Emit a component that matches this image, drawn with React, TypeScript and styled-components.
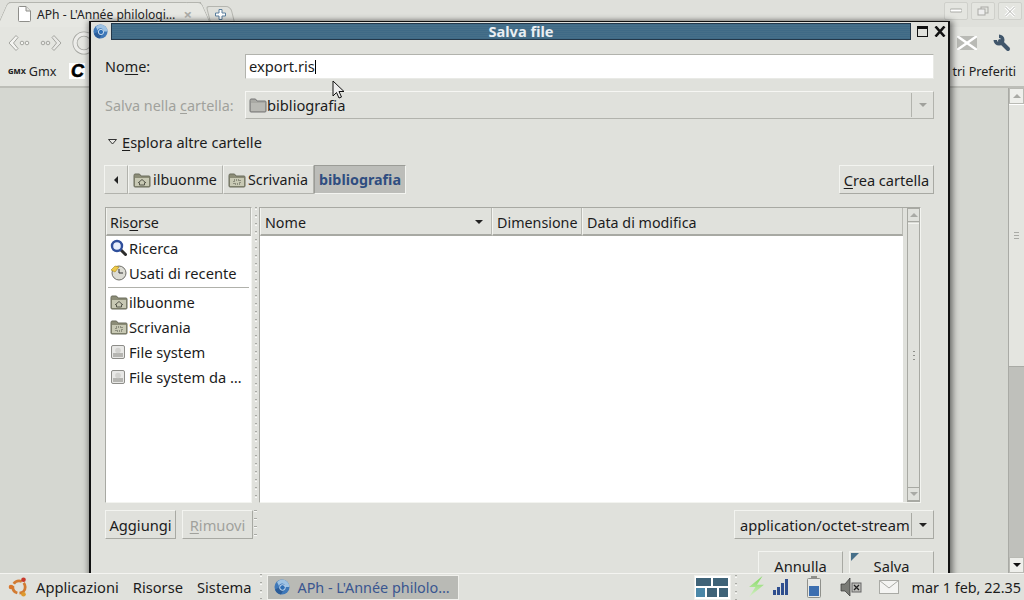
import React from 'react';
import styled, { createGlobalStyle } from 'styled-components';

const Global = createGlobalStyle`
  html, body { margin: 0; padding: 0; width: 1024px; height: 600px; overflow: hidden; }
  body { font-family: "Noto Sans", "Open Sans", sans-serif; font-size: 14.7px; color: #1c1c1c; background: #d5d7d1; }
  * { box-sizing: border-box; }
`;

const Desktop = styled.div`
  position: relative; width: 1024px; height: 600px; overflow: hidden;
  display: flex; flex-direction: column;
`;

/* ---------- browser behind ---------- */
const Browser = styled.div`
  flex: 1; min-height: 0; display: flex; flex-direction: column; background: #e4e5e0;
`;
const TabStrip = styled.div`
  height: 27px; display: flex; align-items: flex-end; padding-left: 9px; position: relative;
  background: #dfe0db;
`;
const Tab = styled.div`
  position: relative; width: 192px; height: 25px; padding: 0 9px 2px 9px; display: flex; align-items: center; gap: 6px;
  background: #e6e7e2; border-top: 1px solid #b4b5af; font-size: 12.1px; color: #222;
  &::before, &::after {
    content: ''; position: absolute; top: -1px; bottom: 0; width: 14px; background: #e6e7e2; border-top: 1px solid #b4b5af;
  }
  &::before { left: -7px; transform: skewX(-24deg); border-left: 1px solid #b4b5af; border-top-left-radius: 4px; }
  &::after { right: -6px; transform: skewX(24deg); border-right: 1px solid #b4b5af; border-top-right-radius: 4px; }
`;
const TabPart = styled.span`
  position: relative; z-index: 1; display: flex; align-items: center; flex: none;
`;
const TabTitle = styled(TabPart)` flex: 1; white-space: nowrap; `;
const TabClose = styled(TabPart)` color: #a9a9a5; font-size: 15px; font-weight: 700; `;
const NewTab = styled.div`
  width: 25px; height: 17px; margin: 0 0 4px 7px; border: 1px solid #b4b5af; border-radius: 3px 5px 0 0; transform: skewX(14deg);
  display: flex; align-items: center; justify-content: center;
`;
const NewTabGlyph = styled.svg` transform: skewX(-14deg); `;
const WinButtons = styled.div`
  position: absolute; right: 2px; top: 2px; display: flex; gap: 3px;
`;
const WinButton = styled.div`
  width: 24px; height: 18px; border: 1px solid #cfd0cb; border-radius: 2px; background: #e4e5e0;
  display: flex; align-items: center; justify-content: center;
`;
const Toolbar = styled.div`
  height: 32px; display: flex; align-items: center; padding: 0 13px 0 8px; background: #e4e5e0;
`;
const ToolSlot = styled.div<{ $mr: number }>`
  margin-right: ${p => p.$mr}px; display: flex; align-items: center;
`;
const ToolSpacer = styled.div` flex: 1; `;
const Bookmarks = styled.div`
  height: 29px; display: flex; align-items: center; padding: 0 8px 3px 8px; font-size: 12.6px; color: #222;
  background: #e4e5e0; border-bottom: 2px solid #bdbeb8;
`;
const GmxLogo = styled.span` font-size: 7.5px; font-weight: 800; margin-right: 3px; `;
const CLogo = styled.span`
  width: 16px; height: 16px; margin-left: 13px; background: #fff; color: #000; font-weight: 900; font-style: italic;
  font-size: 18px; line-height: 16px; text-align: center; font-family: "Liberation Sans", sans-serif;
  -webkit-text-stroke: .6px #000;
`;
const BookmarkRest = styled.span` margin-left: auto; `;
const Page = styled.div`
  flex: 1; min-height: 0; display: flex; justify-content: flex-end; background: #d5d7d1;
`;
const PageScroll = styled.div`
  width: 16px; border-left: 1px solid #a9aaa5; background: #bfc0bb; display: flex; flex-direction: column; align-items: stretch;
`;
const PageArrow = styled.div`
  height: 16px; flex: none; background: #eeefeb; border: 1px solid #b9bab4; display: flex; align-items: center; justify-content: center;
`;
const PageThumb = styled.div`
  height: 263px; flex: none; background: #e4e5e0; border-bottom: 1px solid #a9aaa5; border-top: 1px solid #fff;
  display: flex; align-items: center; justify-content: center;
`;
const PageTrack = styled.div` flex: 1; `;
const Grip = styled.div`
  width: 5px; height: 7px; border-top: 1px solid #a9aaa5; border-bottom: 1px solid #a9aaa5; position: relative;
  &::after { content: ''; position: absolute; left: 0; right: 0; top: 2px; height: 1px; background: #a9aaa5; }
`;

/* ---------- dialog window, floating over the browser ---------- */
const Dialog = styled.div`
  position: absolute; left: 89px; top: 21px; width: 861px; height: 560px;
  background: #e0e1dc; border: 2px solid #111; border-width: 1px 2px 0 2px;
  box-shadow: 3px 0 6px rgba(0,0,0,.45), -2px 0 5px rgba(0,0,0,.25);
  display: flex; flex-direction: column; overflow: hidden;
`;
const TitleBar = styled.div`
  height: 19px; padding: 1px 1px 1px 2px; display: flex; align-items: center; gap: 3px;
`;
const TitleStrip = styled.div`
  flex: 1; height: 17px; border: 1px solid #24384a; padding-left: 20px;
  background: repeating-linear-gradient(0deg, #3f6a86 0 1px, #466f89 1px 2px);
  color: #e9eef2; font-size: 14.6px; font-weight: 700; text-align: center; line-height: 15px;
`;
const TitleBtns = styled.div` display: flex; align-items: center; gap: 6px; padding: 0 1px 0 3px; `;
const DialogBody = styled.div`
  flex: 1; min-height: 0; padding: 13px 14px 0 13px; display: flex; flex-direction: column;
`;
const FormRow = styled.div<{ $h: number; $mb: number }>`
  height: ${p => p.$h}px; margin-bottom: ${p => p.$mb}px; display: flex; align-items: center; flex: none;
`;
const FieldLabel = styled.label<{ $off?: boolean }>`
  width: 141px; padding-left: 1px; flex: none; font-size: 14.4px; color: ${p => (p.$off ? '#a0a19c' : '#1c1c1c')};
`;
const U = styled.span` text-decoration: underline; text-underline-offset: 2px; `;
const Entry = styled.div`
  position: relative; flex: 1; height: 25px; background: #fff; border: 1px solid #b2b3ad; border-bottom-color: #e9eae6; border-right-color: #e9eae6;
  padding-left: 3px; line-height: 23px; display: flex; align-items: center;
`;
const Caret = styled.span` width: 1px; height: 14px; background: #000; `;
const Pointer = styled.svg` position: absolute; left: 86px; top: 25px; `;
const Combo = styled.div`
  flex: 1; height: 28px; border: 1px solid #f6f6f3; border-right-color: #b2b3ad; border-bottom-color: #b2b3ad;
  display: flex; align-items: center; padding-left: 3px; gap: 0;
`;
const ComboArrowCell = styled.div`
  width: 22px; height: 24px; margin-left: auto; border-left: 1px solid #b2b3ad; display: flex; align-items: center; justify-content: center;
`;
const Triangle = styled.span<{ $c?: string; $dir?: string }>`
  width: 0; height: 0; display: inline-block; flex: none;
  ${p => p.$dir === 'left'
    ? `border-top: 4px solid transparent; border-bottom: 4px solid transparent; border-right: 4px solid ${p.$c || '#222'};`
    : p.$dir === 'up'
    ? `border-left: 4px solid transparent; border-right: 4px solid transparent; border-bottom: 4px solid ${p.$c || '#222'};`
    : `border-left: 4px solid transparent; border-right: 4px solid transparent; border-top: 4px solid ${p.$c || '#222'};`}
`;
const Expander = styled.div`
  height: 20px; margin: 0 0 13px 4px; display: flex; align-items: center; gap: 5px; flex: none; font-size: 14.6px;
`;
const PathRow = styled.div`
  height: 29px; margin-bottom: 13px; display: flex; align-items: stretch; flex: none; font-size: 14.3px;
`;
const PathBtn = styled.div<{ $active?: boolean }>`
  display: flex; align-items: center; gap: 2px; padding: 0 ${p => (p.$active ? 4 : 5)}px 0 4px; flex: none;
  border: 1px solid #f3f4f0; border-right-color: #b2b3ad; border-bottom-color: #b2b3ad;
  ${p => p.$active && `background: #bcbdb9; color: #2f4d80; font-weight: 700; border-color: #9b9c97 #f3f4f0 #f3f4f0 #9b9c97;`}
`;
const PathArrow = styled(PathBtn)` width: 24px; justify-content: center; padding: 0; `;
const Spacer = styled.div` flex: 1; `;
const Btn = styled.div<{ $off?: boolean }>`
  height: 29px; padding: 0 4px; display: flex; align-items: center; justify-content: center; flex: none; white-space: nowrap;
  border: 1px solid #f3f4f0; border-right-color: #a8a9a3; border-bottom-color: #a8a9a3;
  color: ${p => (p.$off ? '#a0a19c' : '#1c1c1c')};
`;
const CreateBtn = styled(Btn)` width: 95px; padding: 0; font-size: 14.6px; `;
const SmallBtn = styled(Btn)` width: 71px; padding: 0; `;
const Panes = styled.div` height: 296px; display: flex; flex: none; margin: 0 13px 0 1px; `;
const Sidebar = styled.div`
  width: 147px; border: 1px solid #a8a9a3; border-right-color: #f3f4f0; border-bottom-color: #f3f4f0; background: #fff;
  display: flex; flex-direction: column;
`;
const ColHead = styled.div<{ $w?: number; $grow?: boolean; $split?: boolean }>`
  height: 28px; ${p => (p.$grow ? 'flex: 1;' : `width: ${p.$w}px;`)} background: #e0e1dc; display: flex; align-items: center; padding: 2px 4px 0 4px; flex-shrink: 0;
  font-size: 14.3px;
  border-bottom: 2px solid #a8a9a3; border-right: 1px solid #b9bab4; border-left: 1px solid #f3f4f0;
  ${p => p.$split && 'justify-content: space-between; padding-right: 8px;'}
`;
const SideHead = styled(ColHead)` flex: none; padding-left: 3px; `;
const SideList = styled.div` display: flex; flex-direction: column; margin-top: -1px; `;
const SideItem = styled.div`
  height: 25px; display: flex; align-items: center; padding-left: 4px; white-space: nowrap; overflow: hidden;
`;
const SideIcon = styled.span` width: 19px; flex: none; display: flex; align-items: center; `;
const SideSep = styled.div` height: 1px; margin: 2px 2px 1px; background: #b0b1ab; `;
const Handle = styled.div<{ $w?: number }>`
  width: ${p => p.$w || 7}px; flex: none;
  background: repeating-linear-gradient(180deg, #a9aaa5 0 1px, #e0e1dc 1px 2px, #f8f8f6 2px 3px, #e0e1dc 3px 8px) center/2px 100% repeat-y;
`;
const FileArea = styled.div`
  flex: 1; display: flex; border: 1px solid #a8a9a3; border-right-color: #f3f4f0; border-bottom-color: #f3f4f0;
`;
const FileMain = styled.div` flex: 1; background: #fff; display: flex; flex-direction: column; min-width: 0; `;
const FileHead = styled.div` display: flex; `;
const VScroll = styled.div`
  width: 13px; margin: 0 0 0 4px; border: 1px solid #a8a9a3; display: flex; flex-direction: column; background: #d9dad5; flex: none;
`;
const ScrollBtn = styled.div`
  height: 13px; background: #e0e1dc; display: flex; align-items: center; justify-content: center; flex: none;
  border-bottom: 1px solid #a8a9a3;
`;
const ScrollThumb = styled.div`
  flex: 1; margin: 1px 0 0; background: #e0e1dc; border-top: 1px solid #f3f4f0; border-bottom: 1px solid #a8a9a3; display: flex; align-items: center; justify-content: center;
`;
const Dots = styled.div`
  width: 2px; height: 10px; background: repeating-linear-gradient(180deg, #8f908b 0 1px, transparent 1px 4px);
`;
const ScrollArea = styled.div` flex: none; width: 17px; display: flex; `;
const BottomRow = styled.div`
  height: 29px; margin: 7px 0 0 1px; display: flex; align-items: stretch; gap: 6px; flex: none;
`;
const SmallHandle = styled.div`
  width: 3px; margin-left: -5px; background: repeating-linear-gradient(180deg, #a9aaa5 0 1px, #f8f8f6 1px 2px, #e0e1dc 2px 8px);
`;
const TypeCombo = styled.div`
  width: 200px; height: 29px; border: 1px solid #f3f4f0; border-right-color: #a8a9a3; border-bottom-color: #a8a9a3;
  display: flex; align-items: center; padding-left: 5px; margin-left: auto; white-space: nowrap;
`;
const TypeArrow = styled.div`
  height: 23px; width: 22px; margin-left: auto; border-left: 1px solid #a8a9a3; display: flex; align-items: center; justify-content: center; flex: none;
`;
const ActionRow = styled.div`
  margin-top: 12px; display: flex; justify-content: flex-end; gap: 6px; height: 29px; flex: none;
`;
const Action = styled(Btn)` width: 85px; position: relative; `;
const Corner = styled.span`
  position: absolute; left: 1px; top: 1px; width: 0; height: 0; border-top: 8px solid #466f89; border-right: 8px solid transparent;
`;

/* ---------- panel ---------- */
const Panel = styled.div`
  height: 27px; flex: none; position: relative; z-index: 2; background: #e0e1dc; border-top: 1px solid #f4f4f1;
  display: flex; align-items: center; padding-left: 8px;
`;
const PanelMenu = styled.span<{ $ml?: number; $mr?: number }>`
  margin-left: ${p => p.$ml || 0}px; margin-right: ${p => p.$mr ?? 14}px;
`;
const TaskHandle = styled(Handle)<{ $m?: string }>` align-self: stretch; width: 10px; margin: ${p => p.$m || '0 1px 0 0'}; `;
const Task = styled.div`
  width: 192px; height: 25px; background: #b9bab5; border: 1px solid #f0f0ec; font-size: 14.4px;
  display: flex; align-items: center; padding-left: 6px; gap: 7px; color: #3a5690; white-space: nowrap;
`;
const Tray = styled.div` margin-left: auto; display: flex; align-items: center; `;
const TrayIcon = styled.svg<{ $ml?: number }>` margin-left: ${p => p.$ml || 0}px; flex: none; `;
const Clock = styled.span` margin: 0 3px 0 13px; white-space: nowrap; font-size: 14.4px; `;
const Switcher = styled.div`
  width: 37px; height: 25px; padding: 2px 1px; border: 1px solid #f0f0ec; background: #fff; display: grid;
  grid-template-columns: repeat(6, 1fr); grid-template-rows: 1fr 1fr; gap: 2px;
`;
const Desk = styled.div<{ $span: number; $on?: boolean }>`
  grid-column: span ${p => p.$span}; background: ${p => (p.$on ? '#4a87a8' : '#3f6378')};
`;

/* ---------- icons ---------- */
const FolderIcon = ({ kind }: { kind: 'home' | 'desk' | 'plain' }) => (
  <svg width="18" height="16" viewBox="0 0 18 16">
    <path d="M1 3.5 L1 14 Q1 15 2 15 L16 15 Q17 15 17 14 L17 5 Q17 4 16 4 L8 4 L6.5 2 L2 2 Q1 2 1 3.5Z" fill={kind === 'plain' ? '#a9a9a4' : '#8c8d77'} stroke={kind === 'plain' ? '#777' : '#6b6c5c'} strokeWidth="1" />
    <rect x="2" y="6" width="14" height="8" fill={kind === 'plain' ? '#b9b9b4' : '#c8c9b4'} />
    {kind === 'home' && <path d="M5 11 L9 7.5 L13 11 M6.5 10.5 V13 H11.5 V10.5" fill="none" stroke="#55564a" strokeWidth="1" />}
    {kind === 'desk' && <rect x="6" y="8" width="6" height="4" fill="none" stroke="#55564a" strokeWidth="1" strokeDasharray="1 1" />}
  </svg>
);
const SearchIcon = () => (
  <svg width="17" height="17" viewBox="0 0 17 17">
    <line x1="10" y1="10" x2="15.5" y2="15.5" stroke="#2c2c2c" strokeWidth="3" strokeLinecap="round" />
    <circle cx="7" cy="7" r="5" fill="#e7eefb" stroke="#2f4f9b" strokeWidth="2.4" />
  </svg>
);
const RecentIcon = () => (
  <svg width="17" height="17" viewBox="0 0 17 17">
    <circle cx="9" cy="9" r="7" fill="#dcdcd4" stroke="#6e6e68" />
    <path d="M9 5 V9 H13" fill="none" stroke="#333" strokeWidth="1" />
    <path d="M1 6 L5 2 L9 3 L5 8Z" fill="#eec94a" stroke="#a88a1e" strokeWidth=".6" />
  </svg>
);
const DriveIcon = () => (
  <svg width="16" height="16" viewBox="0 0 16 16">
    <rect x="1.5" y="1.5" width="13" height="13" rx="1.5" fill="#e8e8e6" stroke="#8d8d89" />
    <rect x="3" y="9" width="10" height="4" fill="#b5b5b1" />
    <circle cx="8" cy="6.5" r="2.8" fill="#d2d2cf" />
  </svg>
);
const ChromeIcon = ({ s = 16 }: { s?: number }) => (
  <svg width={s} height={s} viewBox="0 0 16 16">
    <circle cx="8" cy="8" r="7.5" fill="#3f78b8" />
    <path d="M8 .5 A7.5 7.5 0 0 1 15.5 8 L11 8 A3 3 0 0 0 5 7 L3 3 A7.5 7.5 0 0 1 8 .5Z" fill="#9fc3e3" />
    <path d="M1 10.5 A7.5 7.5 0 0 0 7 15.5 L10 10 A3 3 0 0 1 5 8.5Z" fill="#2b5c98" />
    <circle cx="8.5" cy="8.5" r="2.8" fill="#2f6fb5" stroke="#cfe0f0" strokeWidth="1" />
  </svg>
);
const UbuntuIcon = () => (
  <svg width="22" height="22" viewBox="0 0 22 22">
    <circle cx="11" cy="11" r="6.2" fill="none" stroke="#d27b32" strokeWidth="2.8" strokeDasharray="9 2.2" />
    <circle cx="3" cy="11" r="2.3" fill="#d9772c" />
    <circle cx="15.5" cy="3.8" r="2.3" fill="#c8392b" />
    <circle cx="15.5" cy="18.2" r="2.3" fill="#dd9a2e" />
  </svg>
);
const PageIcon = () => (
  <svg width="13" height="16" viewBox="0 0 13 16">
    <path d="M.5 1.5 Q.5 .5 1.5 .5 H8 L12.5 5 V14.5 Q12.5 15.5 11.5 15.5 H1.5 Q.5 15.5 .5 14.5Z" fill="#fff" stroke="#8e8e8a" />
    <path d="M8 .5 V5 H12.5" fill="#e4e4e0" stroke="#8e8e8a" />
  </svg>
);
const BackIcon = () => (
  <svg width="22" height="18" viewBox="0 0 22 18">
    <path d="M8 1.5 L1 9 L8 16.5 L10 14.5 L5.5 9 L10 3.5Z" fill="#f4f4f1" stroke="#a4a5a0" />
    <circle cx="14" cy="9" r="1.8" fill="#f4f4f1" stroke="#a4a5a0" />
    <circle cx="19" cy="9" r="1.8" fill="#f4f4f1" stroke="#a4a5a0" />
  </svg>
);
const ForwardIcon = () => (
  <svg width="22" height="18" viewBox="0 0 22 18">
    <path d="M14 1.5 L21 9 L14 16.5 L12 14.5 L16.5 9 L12 3.5Z" fill="#e8e8e5" stroke="#a4a5a0" />
    <circle cx="8" cy="9" r="1.8" fill="#e8e8e5" stroke="#a4a5a0" />
    <circle cx="3" cy="9" r="1.8" fill="#e8e8e5" stroke="#a4a5a0" />
  </svg>
);

export default function App() {
  return (
    <Desktop>
      <Global />
      <Browser>
        <TabStrip>
          <Tab>
            <TabPart><PageIcon /></TabPart>
            <TabTitle>APh - L'Année philologi…</TabTitle>
            <TabClose>×</TabClose>
          </Tab>
          <NewTab>
            <NewTabGlyph width="11" height="11" viewBox="0 0 11 11"><path d="M4 .5 H7 V4 H10.5 V7 H7 V10.5 H4 V7 H.5 V4 H4Z" fill="#fff" stroke="#5a7f9e" /></NewTabGlyph>
          </NewTab>
          <WinButtons>
            <WinButton><svg width="12" height="6"><rect x="0" y="1" width="12" height="3" rx="1" fill="#fff" stroke="#a9aaa5" /></svg></WinButton>
            <WinButton><svg width="12" height="10"><rect x="4" y="1" width="7" height="6" fill="none" stroke="#a9aaa5" /><rect x="1" y="3" width="7" height="6" fill="#eee" stroke="#a9aaa5" /></svg></WinButton>
            <WinButton><svg width="12" height="11"><path d="M1.5 1 L10.5 10 M10.5 1 L1.5 10" stroke="#fff" strokeWidth="3" /><path d="M1.5 1 L10.5 10 M10.5 1 L1.5 10" stroke="#b0b1ac" strokeWidth="1" /></svg></WinButton>
          </WinButtons>
        </TabStrip>
        <Toolbar>
          <ToolSlot $mr={10}><BackIcon /></ToolSlot>
          <ToolSlot $mr={10}><ForwardIcon /></ToolSlot>
          <svg width="24" height="24" viewBox="0 0 24 24"><circle cx="12" cy="12" r="9" fill="none" stroke="#a4a5a0" strokeWidth="5" /><circle cx="12" cy="12" r="9" fill="none" stroke="#ecece9" strokeWidth="3.4" /></svg>
          <ToolSpacer />
          <ToolSlot $mr={16}><svg width="20" height="14" viewBox="0 0 20 14"><rect width="20" height="14" fill="#b9bab5" /><path d="M0 0 L20 14 M20 0 L0 14" stroke="#fff" strokeWidth="2.5" /></svg></ToolSlot>
          <svg width="18" height="18" viewBox="0 0 18 18"><path d="M2.2 6 A3.8 3.8 0 1 0 6 2.2" fill="none" stroke="#40566b" strokeWidth="3.4" /><line x1="7" y1="7" x2="15" y2="15" stroke="#40566b" strokeWidth="4" strokeLinecap="round" /></svg>
        </Toolbar>
        <Bookmarks>
          <GmxLogo>GMX</GmxLogo>Gmx
          <CLogo>C</CLogo>
          <BookmarkRest>tri Preferiti</BookmarkRest>
        </Bookmarks>
        <Page>
          <PageScroll>
            <PageArrow><Triangle $dir="up" $c="#a9aaa5" /></PageArrow>
            <PageThumb><Grip /></PageThumb>
            <PageTrack />
            <PageArrow><Triangle $c="#111" /></PageArrow>
          </PageScroll>
        </Page>
      </Browser>

      <Dialog>
        <TitleBar>
          <ChromeIcon s={15} />
          <TitleStrip>Salva file</TitleStrip>
          <TitleBtns>
            <svg width="11" height="11" viewBox="0 0 11 11"><rect x=".5" y=".5" width="10" height="10" fill="none" stroke="#111" /><rect x="0" y="0" width="11" height="3" fill="#111" /></svg>
            <svg width="12" height="11" viewBox="0 0 12 11"><path d="M1.5 .5 L10.5 10.5 M10.5 .5 L1.5 10.5" stroke="#111" strokeWidth="2.6" /></svg>
          </TitleBtns>
        </TitleBar>
        <DialogBody>
          <FormRow $h={25} $mb={12}>
            <FieldLabel>No<U>m</U>e:</FieldLabel>
            <Entry>
              export.ris<Caret />
              <Pointer width="14" height="20" viewBox="0 0 14 20"><path d="M1 1 V16 L4.5 12.5 L7 18 L9.5 17 L7 11.5 H12 Z" fill="#eee" stroke="#111" strokeWidth="1" /></Pointer>
            </Entry>
          </FormRow>
          <FormRow $h={28} $mb={13}>
            <FieldLabel $off>Salva nella <U>c</U>artella:</FieldLabel>
            <Combo>
              <FolderIcon kind="plain" />bibliografia
              <ComboArrowCell><Triangle $c="#a0a19c" /></ComboArrowCell>
            </Combo>
          </FormRow>
          <Expander>
            <svg width="9" height="6" viewBox="0 0 9 6"><path d="M.5 .5 H8.5 L4.5 5Z" fill="#e8e8e4" stroke="#333" /></svg>
            <span><U>E</U>splora altre cartelle</span>
          </Expander>
          <PathRow>
            <PathArrow><Triangle $dir="left" /></PathArrow>
            <PathBtn><FolderIcon kind="home" />ilbuonme</PathBtn>
            <PathBtn><FolderIcon kind="desk" />Scrivania</PathBtn>
            <PathBtn $active>bibliografia</PathBtn>
            <Spacer />
            <CreateBtn><U>C</U>rea cartella</CreateBtn>
          </PathRow>
          <Panes>
            <Sidebar>
              <SideHead $grow>Ris<U>o</U>rse</SideHead>
              <SideList>
                <SideItem><SideIcon><SearchIcon /></SideIcon>Ricerca</SideItem>
                <SideItem><SideIcon><RecentIcon /></SideIcon>Usati di recente</SideItem>
                <SideSep />
                <SideItem><SideIcon><FolderIcon kind="home" /></SideIcon>ilbuonme</SideItem>
                <SideItem><SideIcon><FolderIcon kind="desk" /></SideIcon>Scrivania</SideItem>
                <SideItem><SideIcon><DriveIcon /></SideIcon>File system</SideItem>
                <SideItem><SideIcon><DriveIcon /></SideIcon>File system da …</SideItem>
              </SideList>
            </Sidebar>
            <Handle />
            <FileArea>
              <FileMain>
                <FileHead>
                  <ColHead $w={232} $split>Nome<Triangle /></ColHead>
                  <ColHead $w={90}>Dimensione</ColHead>
                  <ColHead $grow>Data di modifica</ColHead>
                </FileHead>
              </FileMain>
              <ScrollArea>
                <VScroll>
                  <ScrollBtn><Triangle $dir="up" $c="#a9aaa5" /></ScrollBtn>
                  <ScrollThumb><Dots /></ScrollThumb>
                  <ScrollBtn><Triangle $c="#a9aaa5" /></ScrollBtn>
                </VScroll>
              </ScrollArea>
            </FileArea>
          </Panes>
          <BottomRow>
            <SmallBtn>Aggiungi</SmallBtn>
            <SmallBtn $off><U>R</U>imuovi</SmallBtn>
            <SmallHandle />
            <TypeCombo>application/octet-stream<TypeArrow><Triangle /></TypeArrow></TypeCombo>
          </BottomRow>
          <ActionRow>
            <Action>A<U>n</U>nulla</Action>
            <Action><Corner /><U>S</U>alva</Action>
          </ActionRow>
        </DialogBody>
      </Dialog>

      <Panel>
        <UbuntuIcon />
        <PanelMenu $ml={6}>Applicazioni</PanelMenu>
        <PanelMenu>Risorse</PanelMenu>
        <PanelMenu $mr={5}>Sistema</PanelMenu>
        <TaskHandle />
        <Task><ChromeIcon />APh - L'Année philolo…</Task>
        <Tray>
          <Switcher>
            <Desk $span={3} /><Desk $span={3} />
            <Desk $span={2} $on /><Desk $span={2} /><Desk $span={2} />
          </Switcher>
          <TaskHandle $m="0 8px 0 0" />
          <TrayIcon width="16" height="22" viewBox="0 0 16 22">
            <defs><linearGradient id="bolt" x1="0" y1="0" x2="0" y2="1"><stop offset="0" stopColor="#7fd85c" /><stop offset="1" stopColor="#d6efc8" /></linearGradient></defs>
            <path d="M13.5 0 L0 11 H6.5 L0 21 L15 8.7 H8 Z" fill="url(#bolt)" />
          </TrayIcon>
          <TrayIcon $ml={7} width="18" height="18" viewBox="0 0 18 18">
            <rect x="1" y="12" width="3" height="5" fill="#2f4f8f" /><rect x="5" y="9" width="3" height="8" fill="#2f4f8f" /><rect x="9" y="5" width="3" height="12" fill="#2f4f8f" /><rect x="13" y="1" width="3" height="16" fill="#2f4f8f" />
          </TrayIcon>
          <TrayIcon $ml={17} width="14" height="22" viewBox="0 0 14 22">
            <rect x="4" y="0" width="6" height="3" fill="#8f908b" /><rect x=".5" y="2.5" width="13" height="19" rx="1" fill="#e8e9e6" stroke="#8f908b" /><rect x="2" y="10" width="10" height="10" fill="#3d6fb0" />
          </TrayIcon>
          <TrayIcon $ml={19} width="22" height="22" viewBox="0 0 22 22">
            <path d="M1 8 H5 L10 2 V20 L5 15 H1Z" fill="#7a7b76" stroke="#333" strokeWidth=".7" /><rect x="12" y="7" width="9" height="9" fill="#bdbdb9" stroke="#666" /><path d="M14 9 L19 14 M19 9 L14 14" stroke="#222" strokeWidth="1.3" />
          </TrayIcon>
          <TrayIcon $ml={17} width="20" height="14" viewBox="0 0 20 14">
            <rect x=".5" y=".5" width="19" height="13" fill="#f4f4f2" stroke="#a9aaa5" /><path d="M.5 .5 L10 8 L19.5 .5" fill="none" stroke="#a9aaa5" />
          </TrayIcon>
          <Clock>mar 1 feb, 22.35</Clock>
        </Tray>
      </Panel>
    </Desktop>
  );
}
